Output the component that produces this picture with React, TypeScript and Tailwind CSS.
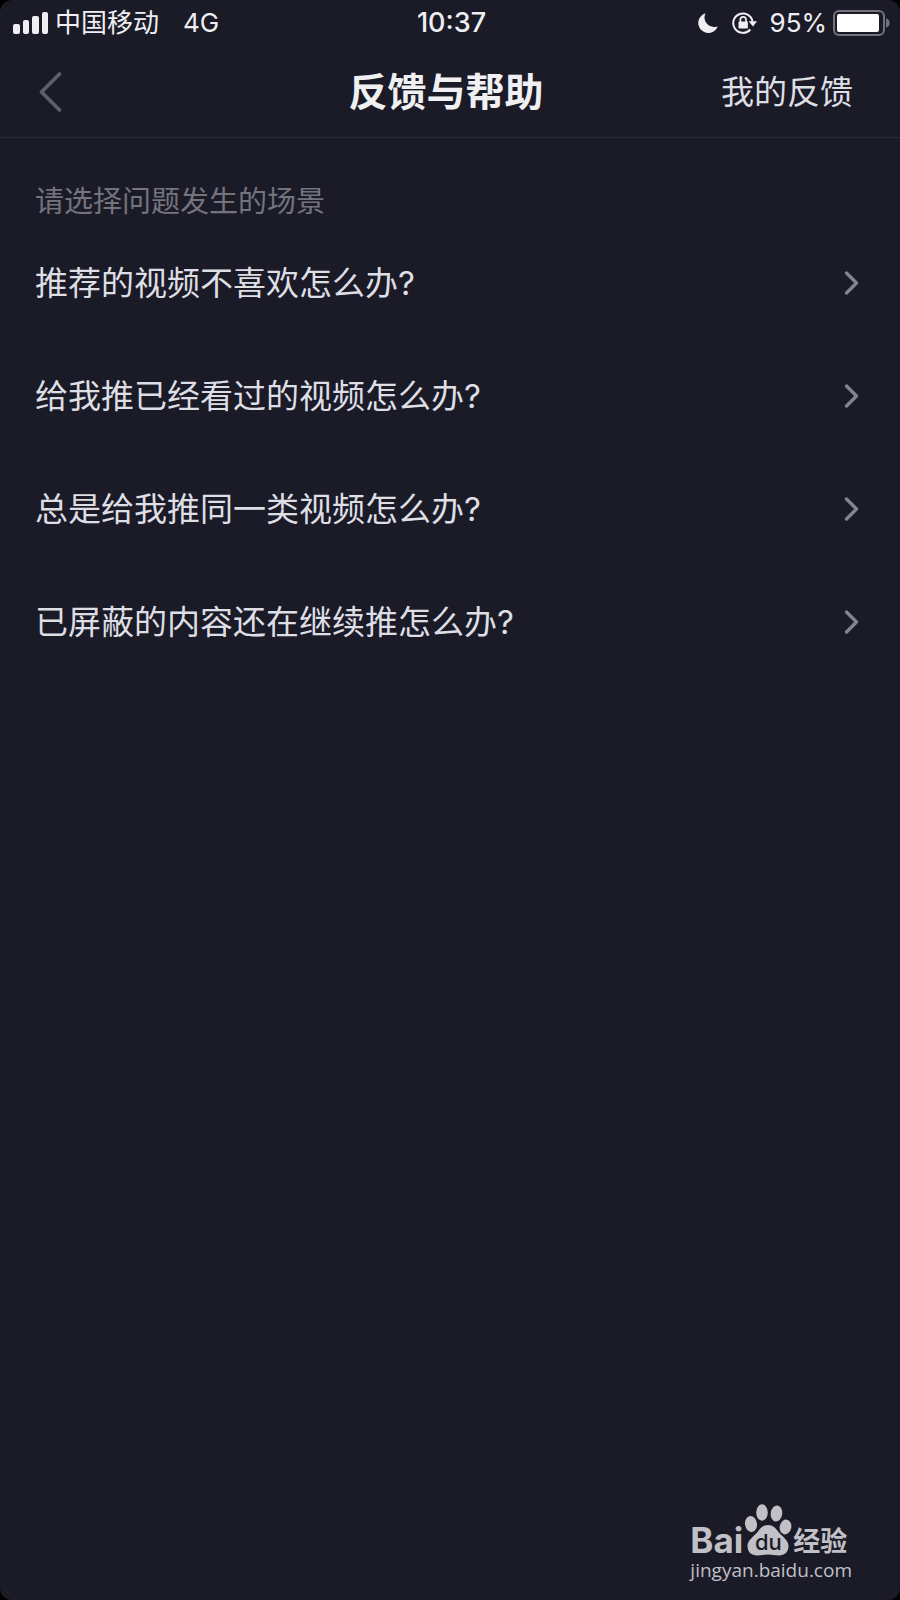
import React from "react";

const questions = [
  "推荐的视频不喜欢怎么办?",
  "给我推已经看过的视频怎么办?",
  "总是给我推同一类视频怎么办?",
  "已屏蔽的内容还在继续推怎么办?",
];

function SignalIcon() {
  return (
    <svg width="36" height="24" viewBox="0 0 36 24" fill="currentColor" aria-hidden="true">
      <rect x="0" y="13" width="7" height="10" rx="2" />
      <rect x="10" y="9" width="6" height="14" rx="2" />
      <rect x="19" y="5" width="7" height="18" rx="2" />
      <rect x="29" y="1" width="6" height="22" rx="2" />
    </svg>
  );
}

function MoonIcon() {
  return (
    <svg width="20" height="20" viewBox="0 0 20 20" fill="currentColor" aria-hidden="true">
      <path d="M7.5 0.3A10 10 0 1 0 19.700 13.200A9.500 9.500 0 0 1 7.500 0.300Z" />
    </svg>
  );
}

function RotationLockIcon() {
  return (
    <svg width="26" height="22" viewBox="0 0 26 22" fill="none" stroke="currentColor" aria-hidden="true">
      <path d="M20.5 9.5A9.7 9.7 0 1 0 18.3 17.5" strokeWidth="2" />
      <path d="M16.6 9.3H25L21 14.6Z" fill="currentColor" stroke="none" />
      <rect x="6.5" y="9.6" width="9.4" height="7" rx="0.8" fill="currentColor" stroke="none" />
      <path d="M8.4 10V7.6a2.8 2.8 0 0 1 5.6 0V10" strokeWidth="1.7" />
    </svg>
  );
}

function BatteryIcon() {
  return (
    <svg width="57" height="26" viewBox="0 0 57 26" aria-hidden="true">
      <rect x="1" y="1" width="50" height="24" rx="5" fill="none" stroke="#73737d" strokeWidth="2" />
      <rect x="4" y="4" width="42" height="18" rx="2" fill="#fff" />
      <path d="M53 8.5a4.6 4.6 0 0 1 0 9Z" fill="#73737d" />
    </svg>
  );
}

function StatusBar() {
  return (
    <div className="grid grid-cols-[1fr_auto_1fr] items-center h-[46px] pl-[13px] pr-[10px] text-[26px] leading-8 text-[#efeff3]">
      <div className="flex items-center">
        <SignalIcon />
        <span className="ml-1.5">中国移动</span>
        <span className="ml-6">4G</span>
      </div>
      <span className="font-medium text-[27px]">10:37</span>
      <div className="flex items-center justify-end">
        <MoonIcon />
        <span className="ml-[14px]">
          <RotationLockIcon />
        </span>
        <span className="ml-3 mr-1.5">95%</span>
        <BatteryIcon />
      </div>
    </div>
  );
}

function Header() {
  return (
    <header className="grid grid-cols-[1fr_auto_1fr] items-center h-[92px] pl-[39px] pr-[47px] border-b border-[#2b2b36]">
      <button type="button" aria-label="返回" className="justify-self-start text-[#5f5f6a]">
        <svg width="23" height="40" viewBox="0 0 23 40" fill="none" stroke="currentColor" strokeWidth="3.6" strokeLinecap="round" strokeLinejoin="round">
          <path d="M20.5 2L2.5 20L20.5 38" />
        </svg>
      </button>
      <h1 className="text-[39px] leading-[48px] font-bold text-[#f0f0f3]">反馈与帮助</h1>
      <a href="#feedback" className="justify-self-end text-[33px] leading-10 text-[#dedee5]">
        我的反馈
      </a>
    </header>
  );
}

function QuestionRow({ text }: { text: string }) {
  return (
    <li>
      <button type="button" className="flex items-center justify-between w-full h-[113px] pl-[35px] pr-10 text-left text-[33px] leading-10 text-[#dedee5]">
        {text}
        <svg width="16" height="26" viewBox="0 0 16 26" fill="none" stroke="#84848f" strokeWidth="3.4" strokeLinecap="round" strokeLinejoin="round" aria-hidden="true">
          <path d="M2.5 3L12.5 13L2.5 23" />
        </svg>
      </button>
    </li>
  );
}

function Watermark() {
  return (
    <footer className="self-end mt-auto mr-12 mb-4 text-[#c0c0c6]">
      <div className="flex items-end">
        <span className="font-bold text-[35px] leading-8">Bai</span>
        <svg width="50" height="52" viewBox="0 0 50 52" fill="currentColor" aria-hidden="true">
          <ellipse cx="8" cy="20" rx="6" ry="8" transform="rotate(-8 8 20)" />
          <ellipse cx="19" cy="8.5" rx="5.8" ry="8.2" />
          <ellipse cx="33.5" cy="9.5" rx="5.8" ry="8" transform="rotate(8 33.5 9.5)" />
          <ellipse cx="42.5" cy="23" rx="5.8" ry="7.5" transform="rotate(12 42.5 23)" />
          <path d="M25 21c5 0 7.5 3 10.5 7s10 8 10 14c0 6-4 9.500-9.500 9.500-4 0-7-1-11-1s-7 1-11 1c-5.500 0-9.500-3.500-9.500-9.500 0-6 7-10 10-14s5.500-7 10.500-7Z" />
          <text x="12" y="46" fontSize="22" fontWeight="500" fill="#1b1b27">du</text>
        </svg>
        <span className="font-bold text-[27px] leading-7">经验</span>
      </div>
      <div className="text-[19px] leading-7 font-medium font-['Open_Sans','Noto_Sans',sans-serif]">
        jingyan.baidu.com
      </div>
    </footer>
  );
}

export default function App() {
  return (
    <div className="min-h-screen flex bg-black font-['Inter','Noto_Sans_CJK_SC',sans-serif]">
      <div lang="zh-CN" className="flex flex-col flex-1 rounded-xl bg-[#1b1b27]">
        <StatusBar />
        <Header />
        <main>
          <h2 className="pt-11 pb-1 pl-[35px] text-[29px] leading-10 text-[#74747e]">
            请选择问题发生的场景
          </h2>
          <ul>
            {questions.map((text) => (
              <QuestionRow key={text} text={text} />
            ))}
          </ul>
        </main>
        <Watermark />
      </div>
    </div>
  );
}
